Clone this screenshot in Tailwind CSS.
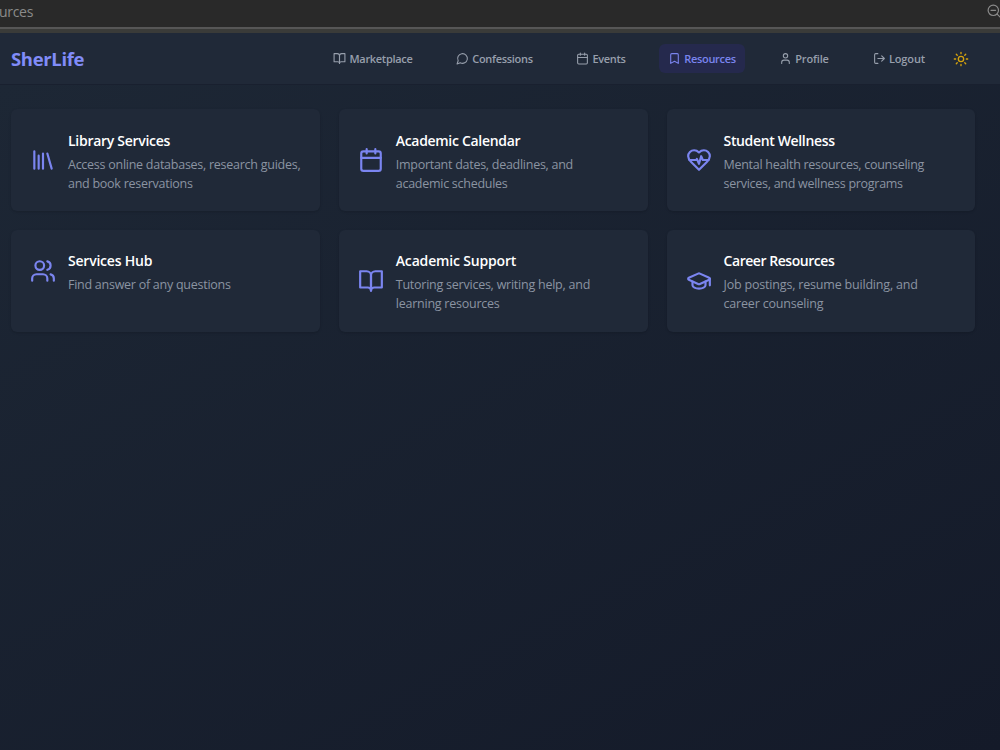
<!DOCTYPE html>
<html lang="en">
<head>
    <meta charset="UTF-8">
    <meta name="viewport" content="width=device-width, initial-scale=1.0">
    <title>SherLife - Resources</title>
    <script src="https://cdn.jsdelivr.net/npm/@tailwindcss/browser@4"></script>
</head>
<body class="h-[750px] overflow-hidden flex flex-col bg-[#141a29] font-['Segoe_UI','Open_Sans','Noto_Sans',sans-serif]">
    <!-- Browser bar -->
    <div class="h-[27px] shrink-0 flex justify-between bg-[#292929] text-[#8b8b8b]">
        <span class="-ml-px text-[14px] leading-[24px] tracking-[-0.3px]">urces</span>
        <svg class="w-[15px] h-[15px] mt-1 -mr-[2px]" viewBox="0 0 15 15" fill="none" stroke="currentColor" stroke-width="1.2" stroke-linecap="round"><circle cx="6.3" cy="6.3" r="5.2"/><path d="M4 6.3h4.6M10.2 10.2l4 4"/></svg>
    </div>
    <div class="h-[6px] shrink-0 bg-[#3a3b39] border-t-2 border-[#565656]"></div>

    <header class="h-[52px] shrink-0 flex items-center pl-[11px] pr-[31px] bg-[#202938] border-b border-[#19202f]">
        <h1 class="pt-px text-[18.5px] font-bold text-[#818cf8] tracking-[-0.35px]">SherLife</h1>
        <nav class="ml-auto flex items-center gap-[25px] text-[11px] font-semibold tracking-[-0.3px] text-[#979fac]">
            <a href="#" class="h-[29px] w-[96px] flex items-center justify-center gap-[3px] rounded-md">
                <svg class="size-[13px] shrink-0" viewBox="0 0 24 24" fill="none" stroke="currentColor" stroke-width="2" stroke-linecap="round" stroke-linejoin="round"><path d="M2 3h6a4 4 0 0 1 4 4v14a3 3 0 0 0-3-3H2z"/><path d="M22 3h-6a4 4 0 0 0-4 4v14a3 3 0 0 1 3-3h7z"/></svg>
                <span class="pt-px">Marketplace</span>
            </a>
            <a href="#" class="h-[29px] w-[97px] flex items-center justify-center gap-[3px] rounded-md">
                <svg class="size-[13px] shrink-0" viewBox="0 0 24 24" fill="none" stroke="currentColor" stroke-width="2" stroke-linecap="round" stroke-linejoin="round"><path d="M7.9 20A9 9 0 1 0 4 16.1L2 22Z"/></svg>
                <span class="pt-px">Confessions</span>
            </a>
            <a href="#" class="h-[29px] w-[66px] flex items-center justify-center gap-[3px] rounded-md">
                <svg class="size-[13px] shrink-0" viewBox="0 0 24 24" fill="none" stroke="currentColor" stroke-width="2" stroke-linecap="round" stroke-linejoin="round"><path d="M8 2v4M16 2v4M3 10h18"/><rect width="18" height="18" x="3" y="4" rx="2"/></svg>
                <span class="pt-px">Events</span>
            </a>
            <a href="#" class="h-[29px] w-[86px] flex items-center justify-center gap-[3px] rounded-md bg-[#25294d] text-[#7a84ee]">
                <svg class="size-[13px] shrink-0" viewBox="0 0 24 24" fill="none" stroke="currentColor" stroke-width="2" stroke-linecap="round" stroke-linejoin="round"><path d="m19 21-7-4-7 4V5a2 2 0 0 1 2-2h10a2 2 0 0 1 2 2v16z"/></svg>
                <span class="pt-px">Resources</span>
            </a>
            <a href="#" class="h-[29px] w-[68px] flex items-center justify-center gap-[3px] rounded-md">
                <svg class="size-[13px] shrink-0" viewBox="0 0 24 24" fill="none" stroke="currentColor" stroke-width="2" stroke-linecap="round" stroke-linejoin="round"><path d="M19 21v-2a4 4 0 0 0-4-4H9a4 4 0 0 0-4 4v2"/><circle cx="12" cy="7" r="4"/></svg>
                <span class="pt-px tracking-[-0.15px]">Profile</span>
            </a>
            <a href="#" class="h-[29px] w-[72px] flex items-center justify-center gap-[3px] rounded-md">
                <svg class="size-[13px] shrink-0" viewBox="0 0 24 24" fill="none" stroke="currentColor" stroke-width="2" stroke-linecap="round" stroke-linejoin="round"><path d="M9 21H5a2 2 0 0 1-2-2V5a2 2 0 0 1 2-2h4"/><path d="m16 17 5-5-5-5M21 12H9"/></svg>
                <span class="pt-px tracking-[-0.1px]">Logout</span>
            </a>
        </nav>
        <button class="ml-[18px] text-[#d6a30c]">
            <svg class="block size-4" viewBox="0 0 24 24" fill="none" stroke="currentColor" stroke-width="2" stroke-linecap="round" stroke-linejoin="round"><circle cx="12" cy="12" r="4"/><path d="M12 2v2M12 20v2m-7.07-17.07 1.41 1.41m11.32 11.32 1.41 1.41M2 12h2M20 12h2M6.34 17.66l-1.41 1.41M19.07 4.93l-1.41 1.41"/></svg>
        </button>
    </header>

    <main class="flex-1 bg-linear-[152deg] from-[#1d2735] to-[#141a29] pt-6 pl-[11px] pr-[24.7px]">
        <div class="grid grid-cols-3 gap-x-[19px] gap-y-[19.7px]">
            <a href="#" class="h-[101.5px] flex items-start gap-[12px] rounded-md bg-[#202938] shadow-sm px-[19px] pt-5">
                <svg class="mt-[18px] size-[26px] shrink-0 text-[#7b85f0]" viewBox="0 0 24 24" fill="none" stroke="currentColor" stroke-width="2" stroke-linecap="round" stroke-linejoin="round"><path d="m16 6 4 14M12 6v14M8 8v12M4 4v16"/></svg>
                <div class="whitespace-nowrap">
                    <h3 class="pt-px text-[14px] leading-[22px] font-semibold text-white tracking-[-0.28px]">Library Services</h3>
                    <p class="mt-[3px] text-[12.5px] leading-[19.2px] text-[#8b94a2] tracking-[-0.26px]">Access online databases, research guides,<br>and book reservations</p>
                </div>
            </a>
            <a href="#" class="h-[101.5px] flex items-start gap-[12px] rounded-md bg-[#202938] shadow-sm px-[19px] pt-5">
                <svg class="mt-[18px] size-[26px] shrink-0 text-[#7b85f0]" viewBox="0 0 24 24" fill="none" stroke="currentColor" stroke-width="2" stroke-linecap="round" stroke-linejoin="round"><path d="M8 2v4M16 2v4M3 10h18"/><rect width="18" height="18" x="3" y="4" rx="2"/></svg>
                <div class="whitespace-nowrap">
                    <h3 class="pt-px text-[14px] leading-[22px] font-semibold text-white tracking-[-0.31px]">Academic Calendar</h3>
                    <p class="mt-[3px] text-[12.5px] leading-[19.2px] text-[#8b94a2] tracking-[-0.27px]">Important dates, deadlines, and<br>academic schedules</p>
                </div>
            </a>
            <a href="#" class="h-[101.5px] flex items-start gap-[12px] rounded-md bg-[#202938] shadow-sm px-[19px] pt-5">
                <svg class="mt-[18px] size-[26px] shrink-0 text-[#7b85f0]" viewBox="0 0 24 24" fill="none" stroke="currentColor" stroke-width="2" stroke-linecap="round" stroke-linejoin="round"><path d="M19 14c1.49-1.46 3-3.21 3-5.5A5.5 5.5 0 0 0 16.5 3c-1.76 0-3 .5-4.5 2-1.5-1.5-2.74-2-4.5-2A5.5 5.5 0 0 0 2 8.5c0 2.3 1.5 4.05 3 5.5l7 7Z"/><path d="M3.22 12H9.5l.5-1 2 4.5 2-7 1.5 3.5h5.27"/></svg>
                <div class="whitespace-nowrap">
                    <h3 class="pt-px text-[14px] leading-[22px] font-semibold text-white tracking-[-0.35px]">Student Wellness</h3>
                    <p class="mt-[3px] text-[12.5px] leading-[19.2px] text-[#8b94a2] tracking-[-0.28px]">Mental health resources, counseling<br>services, and wellness programs</p>
                </div>
            </a>
            <a href="#" class="h-[101.5px] flex items-start gap-[12px] rounded-md bg-[#202938] shadow-sm px-[19px] pt-5">
                <svg class="mt-[8px] size-[26px] shrink-0 text-[#7b85f0]" viewBox="0 0 24 24" fill="none" stroke="currentColor" stroke-width="2" stroke-linecap="round" stroke-linejoin="round"><path d="M16 21v-2a4 4 0 0 0-4-4H6a4 4 0 0 0-4 4v2"/><circle cx="9" cy="7" r="4"/><path d="M22 21v-2a4 4 0 0 0-3-3.87M16 3.13a4 4 0 0 1 0 7.75"/></svg>
                <div class="whitespace-nowrap">
                    <h3 class="text-[14px] leading-[22px] font-semibold text-white tracking-[-0.22px]">Services Hub</h3>
                    <p class="mt-[3px] text-[12.5px] leading-[19.2px] text-[#8b94a2] tracking-[-0.26px]">Find answer of any questions</p>
                </div>
            </a>
            <a href="#" class="h-[101.5px] flex items-start gap-[12px] rounded-md bg-[#202938] shadow-sm px-[19px] pt-5">
                <svg class="mt-[18px] size-[26px] shrink-0 text-[#7b85f0]" viewBox="0 0 24 24" fill="none" stroke="currentColor" stroke-width="2" stroke-linecap="round" stroke-linejoin="round"><path d="M2 3h6a4 4 0 0 1 4 4v14a3 3 0 0 0-3-3H2z"/><path d="M22 3h-6a4 4 0 0 0-4 4v14a3 3 0 0 1 3-3h7z"/></svg>
                <div class="whitespace-nowrap">
                    <h3 class="text-[14px] leading-[22px] font-semibold text-white tracking-[-0.17px]">Academic Support</h3>
                    <p class="mt-[3px] text-[12.5px] leading-[19.2px] text-[#8b94a2] tracking-[-0.24px]">Tutoring services, writing help, and<br>learning resources</p>
                </div>
            </a>
            <a href="#" class="h-[101.5px] flex items-start gap-[12px] rounded-md bg-[#202938] shadow-sm px-[19px] pt-5">
                <svg class="mt-[18px] size-[26px] shrink-0 text-[#7b85f0]" viewBox="0 0 24 24" fill="none" stroke="currentColor" stroke-width="2" stroke-linecap="round" stroke-linejoin="round"><path d="M21.42 10.922a1 1 0 0 0-.019-1.838L12.83 5.18a2 2 0 0 0-1.66 0L2.6 9.08a1 1 0 0 0 0 1.832l8.57 3.908a2 2 0 0 0 1.66 0z"/><path d="M22 10v6M6 12.5V16a6 3 0 0 0 12 0v-3.5"/></svg>
                <div class="whitespace-nowrap">
                    <h3 class="text-[14px] leading-[22px] font-semibold text-white tracking-[-0.45px]">Career Resources</h3>
                    <p class="mt-[3px] text-[12.5px] leading-[19.2px] text-[#8b94a2] tracking-[-0.19px]">Job postings, resume building, and<br>career counseling</p>
                </div>
            </a>
        </div>
    </main>
</body>
</html>
